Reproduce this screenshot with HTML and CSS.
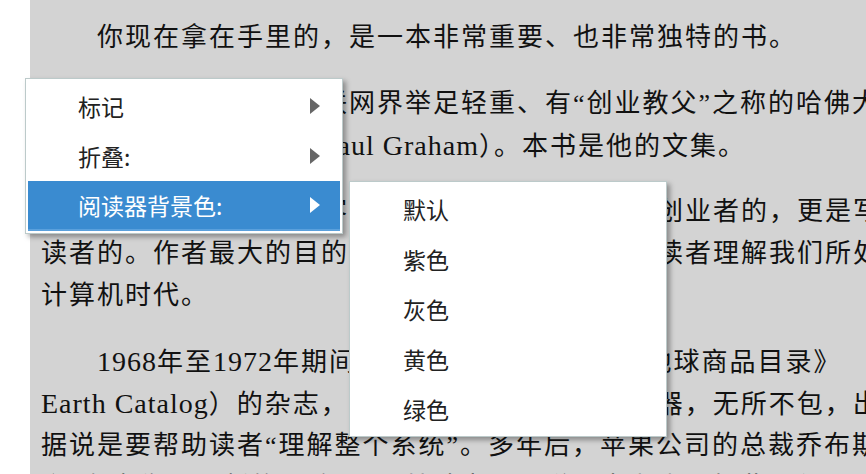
FILE: index.html
```html
<!DOCTYPE html>
<html lang="zh-CN">
<head>
    <meta charset="UTF-8">
    <meta name="viewport" content="width=device-width, initial-scale=1.0">
    <title>阅读器</title>
    <link rel="stylesheet" href="styles.css">
</head>
<body>
    <div class="reader">
        <div class="page">
            <p class="para">
                <span class="line first">你现在拿在手里的，是一本非常重要、也非常独特的书。</span>
            </p>
            <p class="para">
                <span class="line first">本书作者是美国互联网界举足轻重、有“创业教父”之称的哈佛大学计算机博士</span>
                <span class="line">计算机博士格雷厄姆（<span class="en">Paul Graham</span>）。本书是他的文集。</span>
            </p>
            <p class="para">
                <span class="line first">本书不仅是写给黑客、程序员、软件开发者和创业者的，更是写给普通</span>
                <span class="line">读者的。作者最大的目的，是通过这本书帮助普通读者理解我们所处的时代</span>
                <span class="line">计算机时代。</span>
            </p>
            <p class="para">
                <span class="line first"><span class="en">1968</span>年至<span class="en">1972</span>年期间，美国出版过名为 《全地球商品目录》</span>
                <span class="line"><span class="en">Earth Catalog</span>）的杂志，里面介绍了各种工具和机器，无所不包，出版</span>
                <span class="line">据说是要帮助读者“理解整个系统”。多年后，苹果公司的总裁乔布斯期</span>
                <span class="line">之“有点像印刷版的谷歌”。从某种意义上说，本书也是如此，作者试图</span>
            </p>
        </div>
    </div>

    <ul class="menu main-menu">
        <li class="menu-item">
            <span class="label">标记</span>
            <span class="arrow"></span>
        </li>
        <li class="menu-item">
            <span class="label">折叠:</span>
            <span class="arrow"></span>
        </li>
        <li class="menu-item active">
            <span class="label">阅读器背景色:</span>
            <span class="arrow"></span>
            <ul class="menu sub-menu">
                <li class="menu-item"><span class="label">默认</span></li>
                <li class="menu-item"><span class="label">紫色</span></li>
                <li class="menu-item"><span class="label">灰色</span></li>
                <li class="menu-item"><span class="label">黄色</span></li>
                <li class="menu-item"><span class="label">绿色</span></li>
            </ul>
        </li>
    </ul>
</body>
</html>
```

FILE: styles.css
```css
html, body {
    margin: 0;
    height: 100%;
    overflow: hidden;
    background: #ffffff;
}

.reader {
    margin-left: 30px;
    height: 100%;
    overflow: hidden;
    background-color: #d3d3d3;
}

.page {
    padding: 17px 0 0 11px;
    font-family: "Liberation Serif", "Noto Sans CJK SC", serif;
    font-size: 26px;
    letter-spacing: 2px;
    color: #111111;
}

.para {
    margin: 0 0 24px 0;
}

.line {
    display: block;
    height: 42px;
    line-height: 42px;
    white-space: nowrap;
}

.line.first {
    text-indent: 56px;
}

.en {
    font-size: 28px;
    letter-spacing: 1px;
}

/* context menu */
.menu {
    list-style: none;
    margin: 0;
    padding: 2px;
    background: #ffffff;
    border: 1px solid #bccaca;
    box-shadow: 3px 3px 5px rgba(0, 0, 0, 0.35);
    font-family: "Noto Sans CJK SC", "Noto Sans", sans-serif;
    font-size: 23px;
    letter-spacing: 0;
    color: #222222;
}

.main-menu {
    position: absolute;
    left: 25px;
    top: 78px;
    width: 312px;
}

.menu-item {
    position: relative;
    display: flex;
    align-items: center;
    height: 50px;
    padding-left: 50px;
}

.menu-item .label {
    flex: 1;
}

.arrow {
    width: 0;
    height: 0;
    margin-right: 20px;
    border-top: 8px solid transparent;
    border-bottom: 8px solid transparent;
    border-left: 10px solid #666666;
}

.menu-item.active {
    background-color: #3a8bd0;
    color: #ffffff;
    border-bottom: 2px solid #5aa0dc;
    height: 48px;
}

.menu-item.active .arrow {
    border-left-color: #ffffff;
}

.sub-menu {
    position: absolute;
    left: 321px;
    top: 0;
    width: 312px;
    color: #222222;
}

.sub-menu .menu-item {
    padding-left: 51px;
}
```
